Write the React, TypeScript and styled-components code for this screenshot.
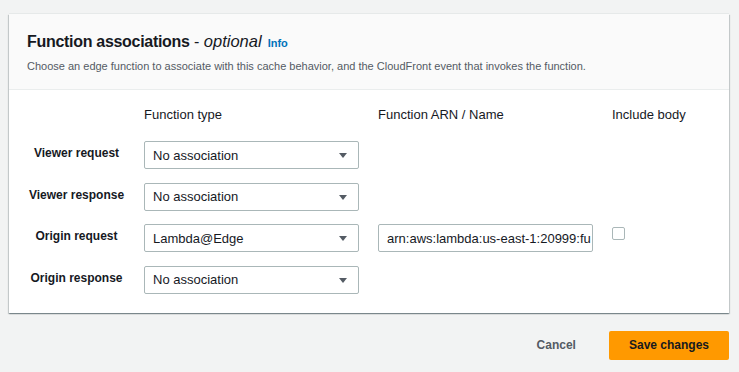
import React from "react";
import styled, { createGlobalStyle } from "styled-components";

const GlobalStyle = createGlobalStyle`
  html, body {
    margin: 0;
    padding: 0;
    background: #f2f3f3;
    font-family: "Liberation Sans", Arial, sans-serif;
    color: #16191f;
  }
  * { box-sizing: border-box; }
`;

const Page = styled.div`
  padding: 14px 10px 0 9px;
  width: 739px;
  height: 372px;
`;

const Card = styled.section`
  background: #ffffff;
  box-shadow: 0 -1px 0 0 #e6e9e9, 0 1px 1px 0 rgba(0, 28, 36, 0.3),
    1px 1px 1px 0 rgba(0, 28, 36, 0.15), -1px 1px 1px 0 rgba(0, 28, 36, 0.15);
`;

const Header = styled.header`
  background: #fafafa;
  border-bottom: 1px solid #eaeded;
  padding: 16px 20px 15px 18px;
  display: flex;
  flex-direction: column;
  gap: 4px;
`;

const TitleRow = styled.div`
  display: flex;
  align-items: baseline;
  font-size: 16px;
  line-height: 22px;
  color: #16191f;
`;

const TitleStrong = styled.h2`
  margin: 0;
  font-size: 16px;
  font-weight: 700;
  letter-spacing: -0.3px;
`;

const Dash = styled.span`
  white-space: pre;
  font-weight: 400;
`;

const Optional = styled.em`
  font-style: italic;
  font-weight: 400;
  font-size: 16.5px;
`;

const InfoLink = styled.a`
  margin-left: 6px;
  font-size: 11px;
  font-weight: 700;
  color: #0073bb;
  text-decoration: none;
`;

const Description = styled.p`
  margin: 0;
  font-size: 11px;
  line-height: 16px;
  color: #545b64;
`;

const Body = styled.div`
  display: grid;
  grid-template-columns: 135px 215px 234px 1fr;
  grid-template-rows: 20.5px repeat(4, 28px);
  row-gap: 13.5px;
  padding: 17px 0 19px;

  & > :nth-child(4n + 3),
  & > :nth-child(4n) {
    margin-left: 19px;
  }
`;

const ColHead = styled.div`
  font-size: 13px;
  line-height: 16px;
  color: #16191f;
`;

const RowLabel = styled.div`
  text-align: center;
  font-size: 12px;
  font-weight: 700;
  line-height: 16px;
  padding-top: 4px;
  color: #16191f;
`;

const SelectBox = styled.div`
  display: flex;
  align-items: center;
  justify-content: space-between;
  height: 28px;
  padding: 0 11px 0 8px;
  border: 1px solid #aab7b8;
  border-radius: 2px;
  background: #fff;
  font-size: 13px;
  color: #16191f;
`;

const Caret = styled.span`
  width: 0;
  height: 0;
  border-left: 4px solid transparent;
  border-right: 4px solid transparent;
  border-top: 5px solid #545b64;
  margin-top: 1px;
`;

const TextInput = styled.div`
  height: 28px;
  display: flex;
  align-items: center;
  padding: 0 8px;
  border: 1px solid #aab7b8;
  border-radius: 2px;
  background: #fff;
  font-size: 13px;
  color: #16191f;
  white-space: nowrap;
  overflow: hidden;
`;

const CheckCell = styled.div`
  padding-top: 3px;
`;

const Checkbox = styled.span`
  display: block;
  width: 13px;
  height: 13px;
  border: 1px solid #aab7b8;
  border-radius: 2px;
  background: #fff;
`;

const Footer = styled.div`
  display: flex;
  justify-content: flex-end;
  align-items: center;
  gap: 13px;
  margin-top: 18px;
`;

const Button = styled.button<{ $primary?: boolean }>`
  height: 29px;
  padding: 0 20px;
  border: none;
  border-radius: 2px;
  font-family: "Liberation Sans", Arial, sans-serif;
  font-size: 12px;
  font-weight: 700;
  cursor: pointer;
  background: ${(p) => (p.$primary ? "#ff9900" : "transparent")};
  color: ${(p) => (p.$primary ? "#16191f" : "#545b64")};
`;

type Row = { label: string; type: string; arn?: string };

const rows: Row[] = [
  { label: "Viewer request", type: "No association" },
  { label: "Viewer response", type: "No association" },
  { label: "Origin request", type: "Lambda@Edge", arn: "arn:aws:lambda:us-east-1:20999:fu" },
  { label: "Origin response", type: "No association" },
];

export default function App() {
  return (
    <>
      <GlobalStyle />
      <Page>
        <Card>
          <Header>
            <TitleRow>
              <TitleStrong>Function associations</TitleStrong>
              <Dash> - </Dash>
              <Optional>optional</Optional>
              <InfoLink href="#">Info</InfoLink>
            </TitleRow>
            <Description>
              Choose an edge function to associate with this cache behavior, and the CloudFront event that invokes the function.
            </Description>
          </Header>
          <Body>
            <div />
            <ColHead>Function type</ColHead>
            <ColHead>Function ARN / Name</ColHead>
            <ColHead>Include body</ColHead>
            {rows.map((r) => (
              <React.Fragment key={r.label}>
                <RowLabel>{r.label}</RowLabel>
                <SelectBox>
                  <span>{r.type}</span>
                  <Caret />
                </SelectBox>
                {r.arn ? <TextInput>{r.arn}</TextInput> : <div />}
                {r.arn ? (
                  <CheckCell>
                    <Checkbox />
                  </CheckCell>
                ) : (
                  <div />
                )}
              </React.Fragment>
            ))}
          </Body>
        </Card>
        <Footer>
          <Button>Cancel</Button>
          <Button $primary>Save changes</Button>
        </Footer>
      </Page>
    </>
  );
}
